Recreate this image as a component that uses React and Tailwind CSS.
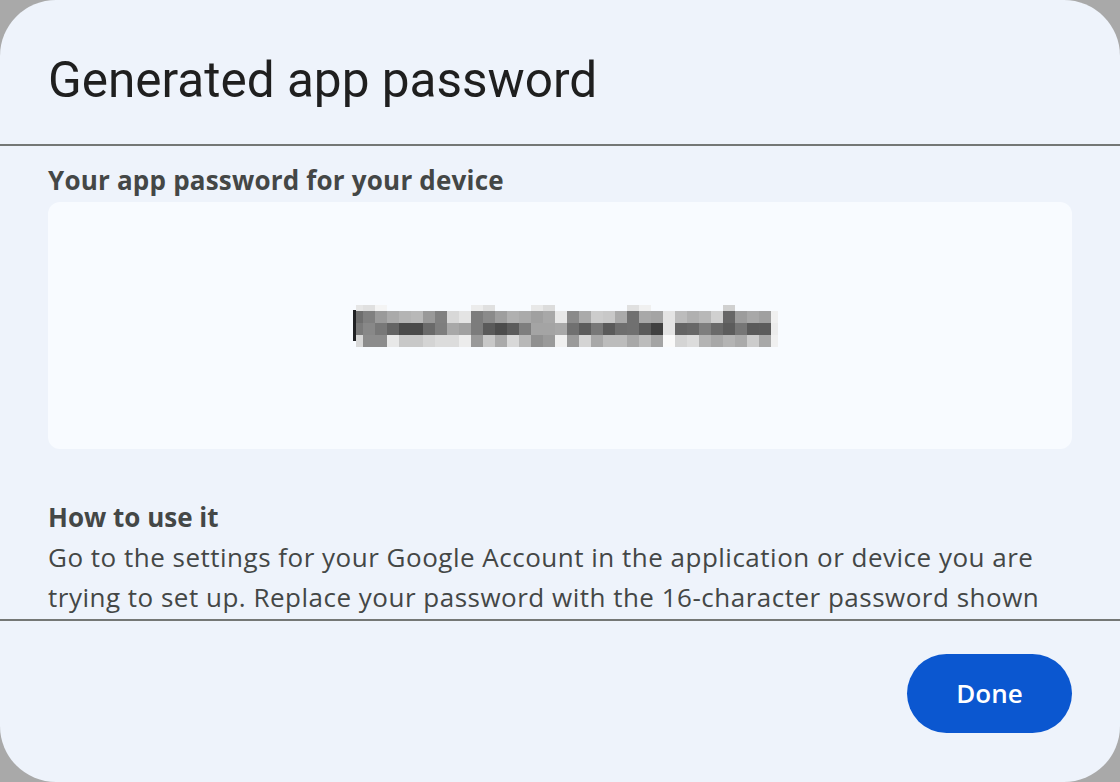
import React from "react";

const COLS = [
  { w: 7, c: ["#e6e6e6", "#6e6e6e", "#7a7a7a", "#d8d8d8"] },
  { w: 12, c: ["#e0e0e0", "#808080", "#888888", "#8c8c8c"] },
  { w: 12, c: ["#f4f4f4", "#9a9a9a", "#787878", "#8c8c8c"] },
  { w: 12, c: ["#f8fbff", "#aaaaaa", "#646464", "#e8e8e8"] },
  { w: 12, c: ["#f8fbff", "#b4b4b4", "#4a4a4a", "#c8c8c8"] },
  { w: 12, c: ["#f8fbff", "#b8b8b8", "#4a4a4a", "#c8c8c8"] },
  { w: 12, c: ["#f8fbff", "#999999", "#6a6a6a", "#d4d4d4"] },
  { w: 12, c: ["#f8fbff", "#808080", "#7e7e7e", "#dcdcdc"] },
  { w: 12, c: ["#f8fbff", "#d8d8d8", "#a8a8a8", "#dcdcdc"] },
  { w: 12, c: ["#f8fbff", "#e4e4e4", "#a0a0a0", "#ececec"] },
  { w: 12, c: ["#ececec", "#7c7c7c", "#7c7c7c", "#999999"] },
  { w: 12, c: ["#e0e0e0", "#8a8a8a", "#5a5a5a", "#c8c8c8"] },
  { w: 12, c: ["#f8fbff", "#9e9e9e", "#4c4c4c", "#aaaaaa"] },
  { w: 12, c: ["#f8fbff", "#b0b0b0", "#5c5c5c", "#d8d8d8"] },
  { w: 12, c: ["#f8fbff", "#aaaaaa", "#7e7e7e", "#b8b8b8"] },
  { w: 12, c: ["#e8e8e8", "#a0a0a0", "#a4a4a4", "#909090"] },
  { w: 12, c: ["#dcdcdc", "#a8a8a8", "#a4a4a4", "#9a9a9a"] },
  { w: 12, c: ["#f8fbff", "#e8e8e8", "#a8a8a8", "#f0f0f0"] },
  { w: 12, c: ["#f8fbff", "#8a8a8a", "#707070", "#9a9a9a"] },
  { w: 12, c: ["#f8fbff", "#aaaaaa", "#5c5c5c", "#d4d4d4"] },
  { w: 12, c: ["#f8fbff", "#cccccc", "#787878", "#a8a8a8"] },
  { w: 12, c: ["#f8fbff", "#c8c8c8", "#5a5a5a", "#bcbcbc"] },
  { w: 12, c: ["#f8fbff", "#aaaaaa", "#6e6e6e", "#bcbcbc"] },
  { w: 12, c: ["#e0e0e0", "#707070", "#707070", "#a8a8a8"] },
  { w: 12, c: ["#f0f0f0", "#a8a8a8", "#5a5a5a", "#bcbcbc"] },
  { w: 12, c: ["#f8fbff", "#a4a4a4", "#404040", "#a4a4a4"] },
  { w: 12, c: ["#f8fbff", "#e4e4e4", "#e4e4e4", "#fafafa"] },
  { w: 12, c: ["#f8fbff", "#bcbcbc", "#646464", "#d4d4d4"] },
  { w: 12, c: ["#f8fbff", "#b0b0b0", "#686868", "#dcdcdc"] },
  { w: 12, c: ["#f8fbff", "#b8b8b8", "#7e7e7e", "#b4b4b4"] },
  { w: 12, c: ["#f8fbff", "#d0d0d0", "#6a6a6a", "#a8a8a8"] },
  { w: 12, c: ["#d0d0d0", "#666666", "#5c5c5c", "#b4b4b4"] },
  { w: 12, c: ["#f8fbff", "#9c9c9c", "#767676", "#aaaaaa"] },
  { w: 12, c: ["#f8fbff", "#a8a8a8", "#5a5a5a", "#cccccc"] },
  { w: 12, c: ["#f8fbff", "#a0a0a0", "#5c5c5c", "#a8a8a8"] },
  { w: 7, c: ["#f8fbff", "#f0f0f0", "#ececec", "#f0f0f0"] },
];

const ROW_H = [6, 12, 12, 12];

function Pixelated() {
  return (
    <div className="relative flex">
      <div className="absolute left-[-3px] top-[5px] h-[31px] w-[3px] bg-[#202124]" />
      {COLS.map((col, i) => (
        <div key={i} className="flex flex-col" style={{ width: col.w }}>
          {col.c.map((color, j) => (
            <div key={j} style={{ height: ROW_H[j], backgroundColor: color }} />
          ))}
        </div>
      ))}
    </div>
  );
}

export default function App() {
  return (
    <div className="h-[782px] w-[1120px] bg-[#a9a9a9] font-['Open_Sans','Liberation_Sans',sans-serif]">
      <div className="flex h-full w-full flex-col overflow-hidden rounded-[56px] bg-[#eef3fb]">
        <div className="h-[144px] shrink-0 px-[48px] pt-[51px]">
          <h1 className="font-['Roboto','Liberation_Sans',sans-serif] text-[49.5px] font-normal leading-[58px] text-[#1f1f1f]">Generated app password</h1>
        </div>
        <div className="h-[2px] shrink-0 bg-[#747775]" />
        <div className="h-[473px] shrink-0 overflow-hidden px-[48px] pt-[17px]">
          <h2 className="text-[26px] font-bold leading-[34px] tracking-[0.2px] text-[#444746]">Your app password for your device</h2>
          <div className="mt-[5px] flex h-[247px] items-center justify-center rounded-[12px] bg-[#f8fbff] pl-[14px]">
            <Pixelated />
          </div>
          <h3 className="mt-[48px] text-[26px] font-bold leading-[40px] text-[#444746]">How to use it</h3>
          <p className="text-[26px] leading-[40px] tracking-[0.5px] text-[#444746]">
            Go to the settings for your Google Account in the application or device you are trying to set up. Replace your password with the 16-character password shown above. Just like your normal password, this app password grants complete access to your Google Account.
          </p>
        </div>
        <div className="h-[2px] shrink-0 bg-[#747775]" />
        <div className="flex flex-1 items-start justify-end px-[48px] pt-[33px]">
          <button className="flex h-[79px] w-[165px] items-center justify-center rounded-full bg-[#0b57d0] text-[26px] font-semibold text-white">
            Done
          </button>
        </div>
      </div>
    </div>
  );
}
